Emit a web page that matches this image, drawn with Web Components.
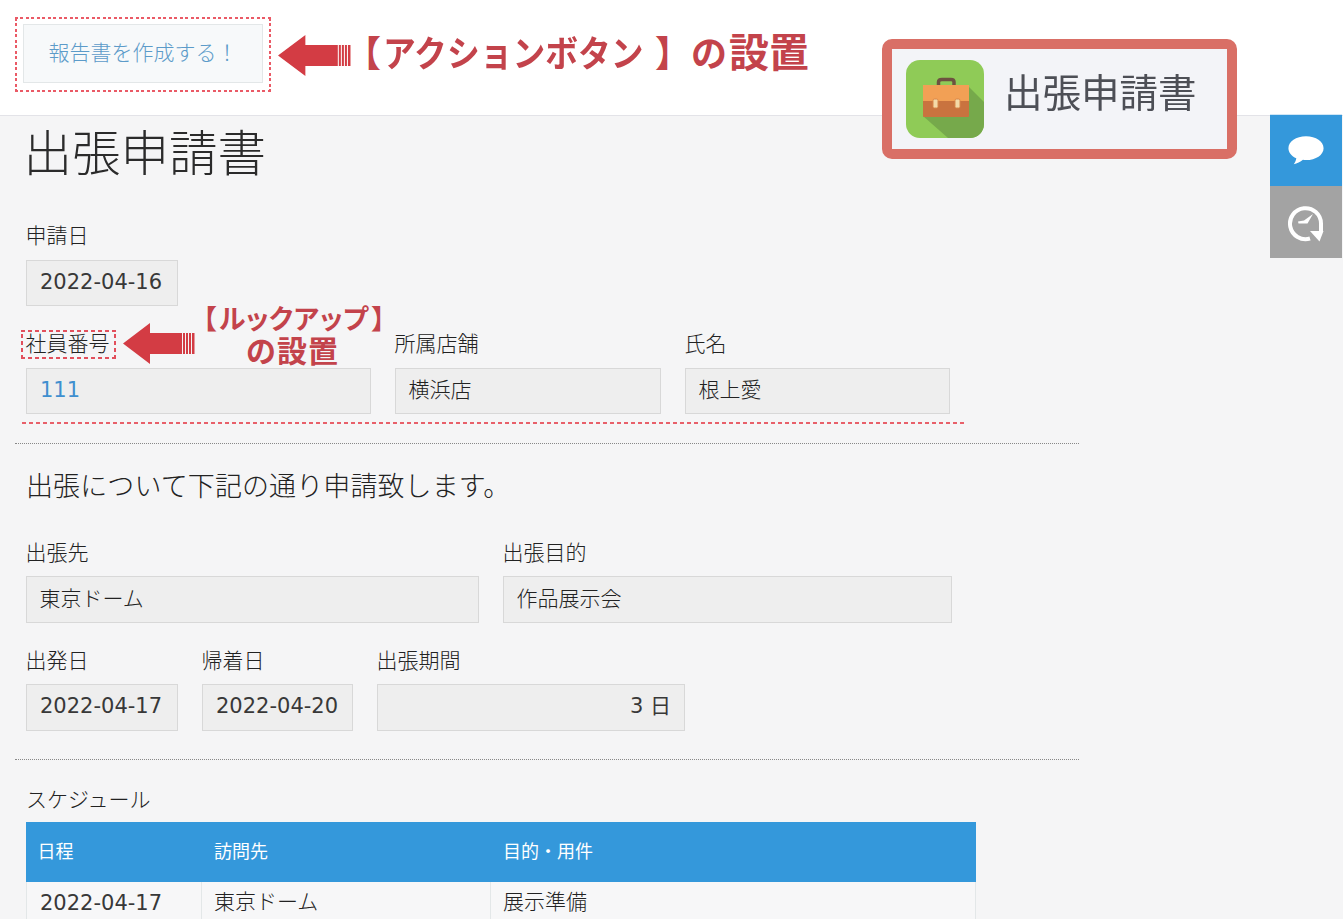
<!DOCTYPE html>
<html lang="ja"><head><meta charset="utf-8">
<style>
html,body{margin:0;padding:0;height:919px;overflow:hidden;background:#f5f5f6}
body{font-family:"Noto Sans CJK JP",sans-serif;color:#333}
</style></head>
<body>
<x-app>
  <x-topbar slot="top"><x-action-button>報告書を作成する！</x-action-button></x-topbar>
  <x-rail slot="rail"></x-rail>
  <x-title>出張申請書</x-title>
  <x-row>
    <x-field label="申請日" value="2022-04-16" w="152"></x-field>
  </x-row>
  <x-row>
    <x-field label="社員番号" value="111" w="345" link></x-field>
    <x-field label="所属店舗" value="横浜店" w="266"></x-field>
    <x-field label="氏名" value="根上愛" w="265"></x-field>
  </x-row>
  <x-hr></x-hr>
  <x-lead>出張について下記の通り申請致します。</x-lead>
  <x-row>
    <x-field label="出張先" value="東京ドーム" w="453" tall></x-field>
    <x-field label="出張目的" value="作品展示会" w="449" tall></x-field>
  </x-row>
  <x-row>
    <x-field label="出発日" value="2022-04-17" w="152" tall></x-field>
    <x-field label="帰着日" value="2022-04-20" w="151" tall></x-field>
    <x-field label="出張期間" value="3 日" w="308" tall right></x-field>
  </x-row>
  <x-hr second></x-hr>
  <x-schedule></x-schedule>
  <x-annotations slot="over"></x-annotations>
</x-app>
<script>
function el(name, css, html){
  customElements.define(name, class extends HTMLElement{
    connectedCallback(){
      if(this.shadowRoot) return;
      const r=this.attachShadow({mode:'open'});
      r.innerHTML='<style>'+css+'</style>'+(typeof html==='function'?html(this):html);
    }
  });
}
const NUM='"DejaVu Sans","Noto Sans CJK JP",sans-serif';
const JP='"Noto Sans CJK JP",sans-serif';

el('x-app',`
:host{display:block;position:relative;width:1343px;height:919px;overflow:hidden;background:#f5f5f6}
.mid{display:flex;align-items:flex-start}
.content{width:1270px;flex:none;box-sizing:border-box;padding-left:15px}
.rail{flex:none;width:73px;margin-top:-2px}
`,`<slot name="top"></slot><div class="mid"><div class="content"><slot></slot></div><div class="rail"><slot name="rail"></slot></div></div><slot name="over"></slot>`);

el('x-topbar',`
:host{display:flex;box-sizing:border-box;height:116px;background:#fff;border-bottom:1px solid #e3e3e8;padding:24px 0 0 23px;align-items:flex-start}
`,`<slot></slot>`);

el('x-action-button',`
:host{display:block;box-sizing:border-box;width:240px;height:59px;background:#f7f9fa;border:1px solid #e3e7e8;color:#5c9bc9;font:300 21px/52px ${JP};text-align:center}
`,`<slot></slot>`);

el('x-title',`
:host{display:block;height:108px;box-sizing:border-box;padding:0 0 0 8.500px;font:300 48.500px/68px ${JP};color:#2b2b2b}
`,`<slot></slot>`);

el('x-row',`
:host{display:flex;gap:24px;padding-left:11px;height:108px;align-items:flex-start}
`,`<slot></slot>`);

el('x-field',`
:host{display:block;flex:none}
.l{height:24px;margin:0 0 12px -.5px;font:300 21px/20px ${JP};color:#222;white-space:nowrap}
.l.tall{line-height:22px}
.v{box-sizing:border-box;height:46px;border:1px solid #d8d8d8;background:#eee;padding:0 12.500px;font:300 21px/38px ${JP};color:#222;white-space:nowrap}
.v.tall{height:47px;line-height:40px}
.v.num{font:400 21px/42px ${NUM};color:#383838;padding:0 13px}
.v.right{text-align:right}
.v.link{color:#3f8fcf}
`,h=>{const v=h.getAttribute('value');const t=h.hasAttribute('tall')?'tall':'';const c=[t,h.hasAttribute('right')?'right':'',h.hasAttribute('link')?'link':'',/^\d/.test(v)?'num':''].join(' ');
return `<div class="l ${t}">${h.getAttribute('label')}</div><div class="v ${c}" style="width:${h.getAttribute('w')}px">${v}</div>`});

el('x-hr',`
:host{display:block;width:1064px;height:0;border-top:1px dotted #888;margin-top:3px}
`,``);

el('x-lead',`
:host{display:block;padding-left:11px;height:96px;box-sizing:border-box;font:300 27px/82px ${JP};letter-spacing:.1px;color:#222;white-space:nowrap}
`,`<slot></slot>`);

el('x-schedule',`
:host{display:block;padding:28px 0 0 11px}
.l{height:24px;margin-bottom:10px;font:300 21px/20px ${JP};color:#222}
table{border-collapse:separate;border-spacing:0;table-layout:fixed;width:950px}
th{height:60px;padding:0 12px 4px;background:#3498db;color:#fff;text-align:left;font:400 18px ${JP};box-sizing:border-box}
th:first-child{padding-left:11.500px}
td{height:46px;padding:0 12px;border:solid #e3e7e8;border-width:0 1px 1px 0;background:#f7f7f8;font:300 21px/37px ${JP};color:#222;box-sizing:border-box;vertical-align:top}
td:first-child{border-left-width:1px;padding-left:13px;font:400 21px/42px ${NUM};color:#383838}
`,`<div class="l">スケジュール</div><table><colgroup><col style="width:176px"><col style="width:289px"><col style="width:485px"></colgroup>
<tr><th>日程</th><th>訪問先</th><th>目的・用件</th></tr>
<tr><td>2022-04-17</td><td>東京ドーム</td><td>展示準備</td></tr></table>`);

el('x-rail',`
:host{display:block;width:72px}
.b{height:71px;display:flex;align-items:center;justify-content:center;background:#3498db;border-top:1px solid #cfe6f6}
.g{height:72px;display:flex;align-items:center;justify-content:center;background:#a3a3a3}
svg{filter:blur(.3px)}
`,`<div class="b"><svg width="38" height="31" viewBox="0 0 40 32"><path fill="#fff" d="M20 1C9.500 1 1.500 6.600 1.500 13.500c0 4.500 3.300 8.400 8.300 10.600-.4 2.300-1.400 4.700-2.700 6.400 3.500-.5 7-2.500 9.700-4.700 1 .1 2.100.2 3.200.2 10.500 0 18.500-5.600 18.500-12.500S30.500 1 20 1z"/></svg></div>
<div class="g"><svg width="40" height="40" viewBox="0 0 40 40" fill="none"><path stroke="#fff" stroke-width="4" d="M24 36.500A15.500 15.500 0 1 1 35 21.500V30"/><path fill="#fff" d="M24 29H37.500L33.500 39.500z"/><path fill="#fff" d="M12 19.500 18 18.500 27 12 21.500 21.500 12.500 21.500z"/></svg></div>`);

const arrow=`<svg width="100%" height="100%" viewBox="0 0 73 41" preserveAspectRatio="none"><path fill="#d33c44" d="M0 20.500 27 0V10H59V31H27V41z"/><g fill="#d33c44"><rect x="60" y="10" width="2" height="21"/><rect x="63" y="10" width="2" height="21"/><rect x="66" y="10" width="2" height="21"/><rect x="69" y="10" width="2.500" height="21"/></g></svg>`;
const dash=(c,on,off)=>`background:
repeating-linear-gradient(90deg,${c} 0 ${on}px,transparent ${on}px ${on+off}px) 0 0/100% 2px no-repeat,
repeating-linear-gradient(90deg,${c} 0 ${on}px,transparent ${on}px ${on+off}px) 0 100%/100% 2px no-repeat,
repeating-linear-gradient(0deg,${c} 0 ${on}px,transparent ${on}px ${on+off}px) 0 0/2px 100% no-repeat,
repeating-linear-gradient(0deg,${c} 0 ${on}px,transparent ${on}px ${on+off}px) 100% 0/2px 100% no-repeat;`;

el('x-annotations',`
:host{display:block;position:absolute;left:0;top:0;width:1343px;height:919px;pointer-events:none}
.a{position:absolute}
.dash1{left:15px;top:17px;width:256px;height:75px;${dash('#ea5a66',3,2.500)}}
.dash2{left:21px;top:330px;width:95px;height:29px;${dash('#e2505c',4,3)}}
.line{left:19px;top:422px;width:945px;height:2px;background:repeating-linear-gradient(90deg,#e8606a 0 4px,transparent 4px 7px) 3px 0}
.ar1{left:278px;top:35px;width:74px;height:41px}
.ar2{left:123px;top:323px;width:73px;height:41px}
.t{color:#c3434b;font-family:${JP};font-weight:700;white-space:nowrap;line-height:1}
.t1{left:345px;top:33px;font-size:36px;width:470px;height:44px}
.t1 span{position:absolute;top:0}
.t2{left:190px;top:304px;font-size:27px;letter-spacing:-2.300px}
.t2 span{margin-left:4px}
.t3{left:246px;top:334px;font-size:30px;letter-spacing:1px}
.call{left:882px;top:39px;width:355px;height:120px;box-sizing:border-box;border:10px solid #d96f66;border-radius:10px;background:#f3f4f8;display:flex;align-items:center;padding-left:14px;gap:20px}
.call .n{font:400 38.500px/1 ${JP};color:#4d4f56;filter:blur(.4px);white-space:nowrap;margin-top:-18px}
.call svg{flex:none;filter:blur(.5px)}
`,`<div class="a dash1"></div>
<div class="a ar1">${arrow}</div>
<div class="a t t1"><span style="left:0">【</span><span style="left:38px;transform-origin:0 0;transform:scaleX(.91)">アクションボタン</span><span style="left:310px">】</span><span style="left:346px">の</span><span style="left:384px;top:-3px;font-size:40px;letter-spacing:0">設置</span></div>
<div class="a dash2"></div>
<div class="a ar2">${arrow}</div>
<div class="a t t2">【<span>ルックアップ</span><span>】</span></div>
<div class="a t t3">の設置</div>
<div class="a line"></div>
<div class="a call"><svg width="78" height="78" viewBox="0 0 78 78"><defs><clipPath id="c"><rect width="78" height="78" rx="14"/></clipPath></defs><g clip-path="url(#c)"><rect width="78" height="78" fill="#8fcb57"/><path fill="#76a94b" d="M63 27 78 42V78H42L17 56z"/><path fill="none" stroke="#6e5240" stroke-width="3.500" d="M32.500 26V22Q32.500 19.500 36 19.500H45Q48 19.500 48 22V26"/><rect x="17" y="25" width="46" height="16" fill="#f2a055"/><path fill="#c9733f" d="M17 41H63V56Q63 57 62 57H18Q17 57 17 56z"/><rect x="27" y="39" width="5" height="9" rx="1.500" fill="#f4d9a8" stroke="#d8874a"/><rect x="49" y="39" width="5" height="9" rx="1.500" fill="#f4d9a8" stroke="#d8874a"/></g></svg><span class="n">出張申請書</span></div>`);
</script>
</body></html>
